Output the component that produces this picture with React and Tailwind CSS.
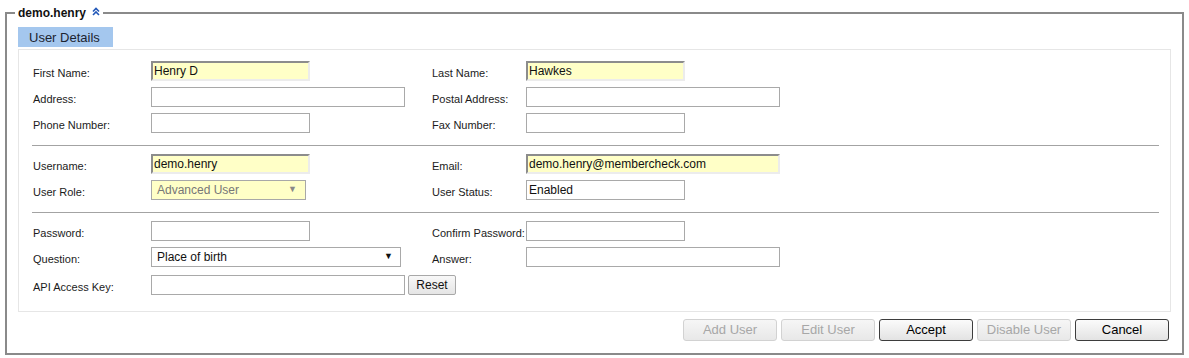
import React from "react";

const font = { fontFamily: '"Liberation Sans", Arial, sans-serif' };

const Label = ({ children }) => (
  <label className="text-[11px] text-[#1b1b1b] leading-[16px] mt-[4px]">{children}</label>
);

const TextInput = ({ value = "", wide, hi }) => (
  <input
    readOnly
    value={value}
    className={
      (wide ? "w-[254px] " : "w-[159px] ") +
      (hi
        ? "bg-[#ffffc7] border-2 border-t-[#8c8c8c] border-l-[#8c8c8c] border-r-[#ececec] border-b-[#ececec] pl-[1px] "
        : "bg-white border border-[#a9a9a9] pl-[2px] ") +
      "h-[20px] text-[12px] text-[#111] outline-none"
    }
  />
);

const Select = ({ value, w, disabled }) => (
  <div
    className={
      w +
      " h-[20px] flex items-center justify-between border text-[12px] " +
      (disabled
        ? "bg-[#ffffc7] border-[#a8a8a8] text-[#777] pl-[5px] pr-[8px]"
        : "bg-white border-[#a9a9a9] text-[#111] pl-[5px] pr-[7px]")
    }
  >
    <span>{value}</span>
    <span className={"text-[9px] " + (disabled ? "text-[#888]" : "text-[#111]")}>▼</span>
  </div>
);

const Row = ({ children }) => (
  <div className="grid grid-cols-[118px_281px_94px_1fr] items-center h-[20px]">{children}</div>
);

const Btn = ({ children, disabled }) => (
  <button
    className={
      "w-[94px] h-[22px] rounded-[3px] text-[13px] border " +
      (disabled
        ? "border-[#d2d2d2] text-[#a7a7a7] bg-gradient-to-b from-[#f6f6f6] to-[#e8e8e8]"
        : "border-[#3d3d3d] text-black bg-gradient-to-b from-[#fbfbfb] to-[#e3e3e3]")
    }
  >
    {children}
  </button>
);

export default function App() {
  return (
    <div className="bg-white w-[1189px] h-[358px] px-[5px] pt-[5px]" style={font}>
      <fieldset className="border-2 border-[#8a8a8a] px-[11px] pb-[12px] pt-[4px] h-[350px]">
        <legend className="-ml-[3px] px-[3px] leading-[16px] flex items-center gap-[6px]">
          <span className="text-[12px] font-bold text-[#111]">demo.henry</span>
          <svg width="8" height="9" viewBox="0 0 8 9" className="mb-[3px]">
            <path d="M1 4.5 L4 1.5 L7 4.5 M1 8 L4 5 L7 8" fill="none" stroke="#2157b8" strokeWidth="1.6" />
          </svg>
        </legend>

        <div className="inline-block bg-[#a4c7ee] h-[20px] w-[95px] pl-[11px] text-[13px] leading-[21px] text-[#1c2430]">
          User Details
        </div>

        <div className="border border-[#e6e6e6] h-[263px] pl-[13px] pr-[11px] pt-[11px]">
          <div className="flex flex-col gap-[6px] pl-[1px]">
            <Row>
              <Label>First Name:</Label>
              <TextInput value="Henry D" hi />
              <Label>Last Name:</Label>
              <TextInput value="Hawkes" hi />
            </Row>
            <Row>
              <Label>Address:</Label>
              <TextInput wide />
              <Label>Postal Address:</Label>
              <TextInput wide />
            </Row>
            <Row>
              <Label>Phone Number:</Label>
              <TextInput />
              <Label>Fax Number:</Label>
              <TextInput />
            </Row>
          </div>

          <div className="border-t border-[#a3a3a3] mt-[12px] mb-[8px]" />

          <div className="flex flex-col gap-[6px] pl-[1px]">
            <Row>
              <Label>Username:</Label>
              <TextInput value="demo.henry" hi />
              <Label>Email:</Label>
              <TextInput value="demo.henry@membercheck.com" wide hi />
            </Row>
            <Row>
              <Label>User Role:</Label>
              <Select value="Advanced User" w="w-[155px]" disabled />
              <Label>User Status:</Label>
              <TextInput value="Enabled" />
            </Row>
          </div>

          <div className="border-t border-[#a3a3a3] mt-[12px] mb-[8px]" />

          <div className="flex flex-col gap-[6px] pl-[1px]">
            <Row>
              <Label>Password:</Label>
              <TextInput />
              <Label>Confirm Password:</Label>
              <TextInput />
            </Row>
            <Row>
              <Label>Question:</Label>
              <Select value="Place of birth" w="w-[250px]" />
              <Label>Answer:</Label>
              <TextInput wide />
            </Row>
            <div className="grid grid-cols-[118px_1fr] items-center h-[20px] mt-[2px]">
              <Label>API Access Key:</Label>
              <div className="flex items-center gap-[3px]">
                <TextInput wide />
                <button className="w-[48px] h-[20px] text-[12px] border border-[#a8a8a8] rounded-[2px] bg-gradient-to-b from-[#f8f8f8] to-[#e5e5e5] text-[#111]">
                  Reset
                </button>
              </div>
            </div>
          </div>
        </div>

        <div className="flex justify-end gap-[4px] mt-[7px] pr-[2px]">
          <Btn disabled>Add User</Btn>
          <Btn disabled>Edit User</Btn>
          <Btn>Accept</Btn>
          <Btn disabled>Disable User</Btn>
          <Btn>Cancel</Btn>
        </div>
      </fieldset>
    </div>
  );
}
